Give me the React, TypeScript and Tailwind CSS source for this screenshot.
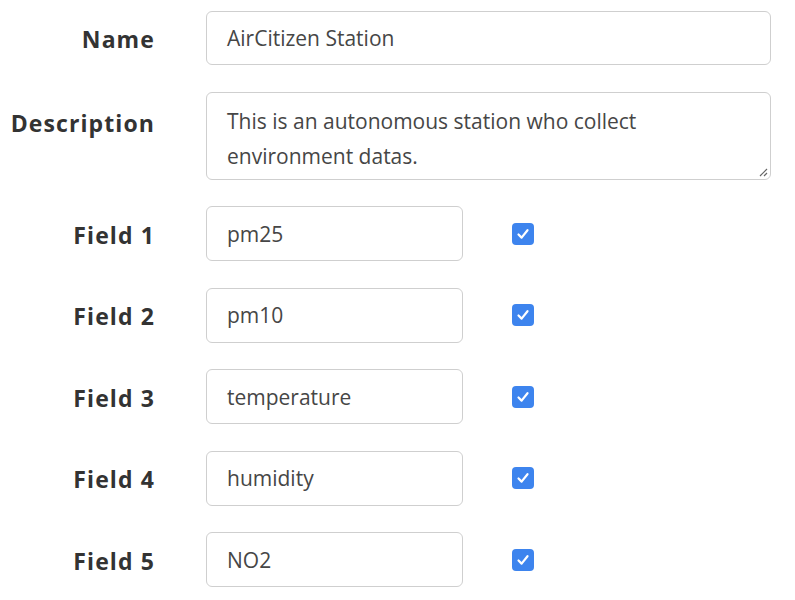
import React from "react";

const fields = ["pm25", "pm10", "temperature", "humidity", "NO2"];

function Check() {
  return (
    <div className="w-[22px] h-[22px] rounded-[4px] bg-[#3d84ee] flex items-center justify-center">
      <svg width="14" height="14" viewBox="0 0 14 14" fill="none">
        <path d="M2.5 7.5 L5.6 10.6 L11.5 3.2" stroke="white" strokeWidth="2.2" strokeLinecap="round" strokeLinejoin="round" />
      </svg>
    </div>
  );
}

export default function App() {
  return (
    <div
      className="bg-white w-[795px] h-[600px] pt-[11px] pr-[24px] text-[#464646]"
      style={{ fontFamily: "'Open Sans', 'Noto Sans', sans-serif" }}
    >
      <div className="grid grid-cols-[155px_1fr] gap-x-[51px] gap-y-[26.5px]">
        <div className="flex items-center justify-end h-[54px] text-[23px] font-bold text-[#333] tracking-[1.1px] pt-[3px]">Name</div>
        <div className="h-[54px] border border-[#cfcfcf] rounded-[6px] flex items-center px-[20px] pt-[2px] text-[21px]">AirCitizen Station</div>

        <div className="flex items-start justify-end pt-[14px] text-[23px] font-bold text-[#333] tracking-[1.1px]">Description</div>
        <div className="relative h-[88px] border border-[#cfcfcf] rounded-[6px] px-[20px] pt-[11px] text-[21px] leading-[35px]">
          This is an autonomous station who collect environment datas.
          <svg className="absolute right-[2px] bottom-[2px]" width="10" height="10" viewBox="0 0 10 10">
            <path d="M9 2 L2 9 M9 6 L6 9" stroke="#666" strokeWidth="1.2" />
          </svg>
        </div>

        {fields.map((f, i) => (
          <React.Fragment key={f}>
            <div className="flex items-center justify-end h-[55px] text-[23px] font-bold text-[#333] tracking-[1.1px] pt-[3px]">Field {i + 1}</div>
            <div className="flex items-center gap-[49px]">
              <div className="w-[257px] h-[55px] border border-[#cfcfcf] rounded-[6px] flex items-center px-[20px] pt-[2px] text-[21px]">{f}</div>
              <Check />
            </div>
          </React.Fragment>
        ))}
      </div>
    </div>
  );
}
